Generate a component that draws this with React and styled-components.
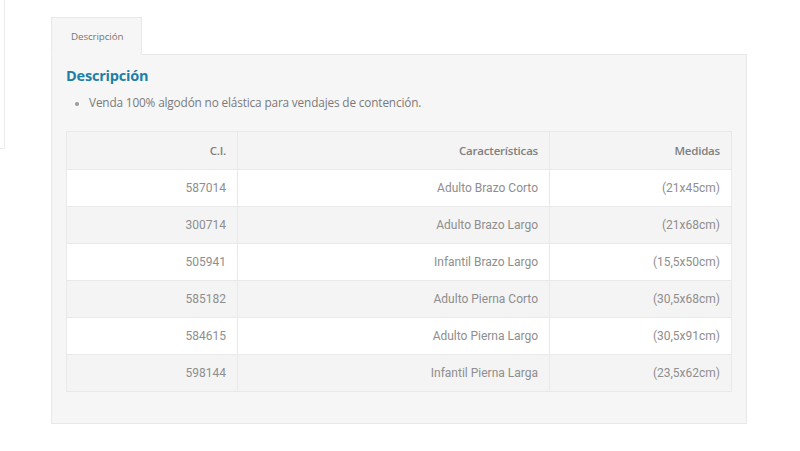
import React from "react";
import styled, { createGlobalStyle } from "styled-components";

const Global = createGlobalStyle`
  html, body { margin: 0; padding: 0; background: #fff; }
  body { font-family: "Open Sans", "Noto Sans", sans-serif; }
`;

const Page = styled.div`
  position: relative;
  width: 800px;
  height: 451px;
  background: #fff;
  overflow: hidden;
`;

const SideBox = styled.div`
  position: absolute;
  left: -10px;
  top: -10px;
  width: 14px;
  height: 158px;
  border-right: 1px solid #ececec;
  border-bottom: 1px solid #ececec;
`;

const Wrap = styled.div`
  padding: 17px 0 0 51px;
  width: 696px;
`;

const Tabs = styled.div`
  display: flex;
  margin-bottom: -1px;
  position: relative;
`;

const Tab = styled.div`
  width: 91px;
  height: 38px;
  box-sizing: border-box;
  display: flex;
  align-items: center;
  padding-left: 19px;
  background: #f6f6f6;
  border: 1px solid #e8e8e8;
  border-bottom-color: #f6f6f6;
  font-family: "Open Sans", sans-serif;
  font-size: 9.8px;
  color: #777;
  letter-spacing: -0.1px;
`;

const Panel = styled.div`
  background: #f6f6f6;
  border: 1px solid #e8e8e8;
  box-sizing: border-box;
  height: 370px;
  padding: 11px 14px 0 14px;
`;

const Heading = styled.h2`
  margin: 0;
  font-family: "Open Sans", sans-serif;
  font-weight: 700;
  font-size: 14.5px;
  color: #1e7fa6;
  letter-spacing: -0.2px;
`;

const List = styled.ul`
  margin: 9px 0 0 0;
  padding: 0 0 0 23px;
  font-size: 11.8px;
  color: #7a7a7a;
  letter-spacing: -0.15px;
  li::marker { color: #999; font-size: 10px; }
`;

const Table = styled.table`
  margin-top: 21px;
  width: 666px;
  border-collapse: collapse;
  font-family: "Roboto", "Open Sans", sans-serif;
  font-size: 12px;
  color: #8e8e8e;
`;

const Th = styled.th`
  height: 37px;
  padding: 0 11px;
  text-align: right;
  font-weight: 600;
  font-family: "Open Sans", sans-serif;
  font-size: 11.5px;
  color: #808080;
  border: 1px solid #e9e9e9;
  letter-spacing: -0.2px;
  width: ${(p) => p.$w || "auto"};
`;

const Tr = styled.tr`
  background: ${(p) => (p.$alt ? "#f4f4f4" : "#fff")};
`;

const HeadRow = styled.tr`
  background: #f4f4f4;
`;

const Td = styled.td`
  height: 36px;
  padding: 0 11px;
  text-align: right;
  border: 1px solid #e9e9e9;
`;

const rows = [
  ["587014", "Adulto Brazo Corto", "(21x45cm)"],
  ["300714", "Adulto Brazo Largo", "(21x68cm)"],
  ["505941", "Infantil Brazo Largo", "(15,5x50cm)"],
  ["585182", "Adulto Pierna Corto", "(30,5x68cm)"],
  ["584615", "Adulto Pierna Largo", "(30,5x91cm)"],
  ["598144", "Infantil Pierna Larga", "(23,5x62cm)"],
];

export default function App() {
  return (
    <Page>
      <Global />
      <SideBox />
      <Wrap>
        <Tabs>
          <Tab>Descripción</Tab>
        </Tabs>
        <Panel>
          <Heading>Descripción</Heading>
          <List>
            <li>Venda 100% algodón no elástica para vendajes de contención.</li>
          </List>
          <Table>
            <thead>
              <HeadRow>
                <Th $w="148px">C.I.</Th>
                <Th $w="289px">Características</Th>
                <Th>Medidas</Th>
              </HeadRow>
            </thead>
            <tbody>
              {rows.map((r, i) => (
                <Tr key={r[0]} $alt={i % 2 === 1}>
                  <Td>{r[0]}</Td>
                  <Td>{r[1]}</Td>
                  <Td>{r[2]}</Td>
                </Tr>
              ))}
            </tbody>
          </Table>
        </Panel>
      </Wrap>
    </Page>
  );
}
